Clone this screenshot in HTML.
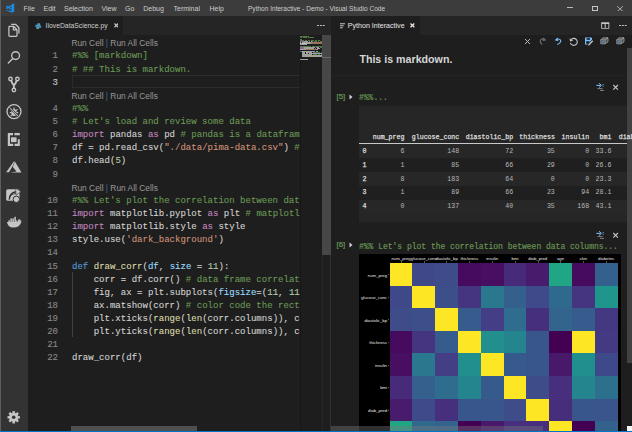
<!DOCTYPE html>
<html><head><meta charset="utf-8">
<style>
*{margin:0;padding:0;box-sizing:border-box}
html,body{width:632px;height:432px;overflow:hidden;background:#1e1e1e;font-family:"Liberation Sans",sans-serif}
.abs{position:absolute}
#title{position:absolute;left:0;top:0;width:632px;height:16px;background:#3c3c3c}
.menu{position:absolute;top:4.6px;font-size:7px;color:#cccccc;white-space:pre}
#ttl{position:absolute;top:5.2px;left:248px;font-size:6.55px;color:#cccccc;white-space:pre}
#act{position:absolute;left:0;top:16px;width:28px;height:415px;background:#333333}
#status{position:absolute;left:0;top:430.8px;width:632px;height:1.2px;background:#0076c6}
#ltabs{position:absolute;left:28px;top:16px;width:303px;height:19px;background:#252526}
#ltab{position:absolute;left:28px;top:16px;width:95px;height:19px;background:#1e1e1e}
#rtabs{position:absolute;left:331px;top:16px;width:301px;height:19px;background:#252526}
#rtab{position:absolute;left:331px;top:16px;width:89px;height:19px;background:#1e1e1e}
.tabt{position:absolute;font-size:6.8px;color:#ffffff;white-space:pre}
.lens{position:absolute;left:71.4px;font-size:8.4px;line-height:13.13px;color:#999999;white-space:pre}
.ln{position:absolute;left:27.5px;width:30px;text-align:right;font-family:"Liberation Mono",monospace;font-size:9.85px;line-height:13.13px;color:#858585;-webkit-text-stroke:0.15px currentColor;transform:scaleX(0.9178);transform-origin:100% 0}
.ln.cur{color:#c6c6c6}
.code{position:absolute;left:71.75px;width:248.7px;overflow:hidden;font-family:"Liberation Mono",monospace;font-size:9.85px;line-height:13.13px;color:#d4d4d4;white-space:pre;-webkit-text-stroke:0.1px currentColor;transform:scaleX(0.9178);transform-origin:0 0}
.c{color:#6a9955}.k{color:#c586c0}.d{color:#569cd6}.f{color:#dcdcaa}.s{color:#ce9178}.n{color:#b5cea8}.v{color:#9cdcfe}
#minimap{position:absolute;left:299.8px;top:35px;width:23px;height:396px;background:#1d1d1d;border-left:0.9px solid #171717}
.trow{position:absolute;left:358.6px;width:268px;height:13.8px}
.tb,.tv{position:absolute;font-family:"Liberation Mono",monospace;font-size:6.6px;line-height:8px;white-space:pre;color:#dcdcdc}
.tb{font-weight:400;-webkit-text-stroke:0.25px currentColor}
.tv{color:#b8b8b8}
.plab{position:absolute;font-size:4.25px;line-height:5px;color:#e8e8e8;white-space:pre}
</style></head><body>
<!-- title bar -->
<div id="title"></div>
<svg class="abs" style="left:0;top:0" width="24" height="16" viewBox="0 0 24 16">
 <path d="M11.4 4.3 L14.2 3.5 V12 L11.6 12.6 L6.2 10.7 L6.5 10.2 L11.4 11 Z" fill="#1b8ae0"/>
 <path d="M6.3 6.1 L11.4 9.2 M6.3 8.6 L11.4 5.6" stroke="#1b8ae0" stroke-width="1.3" fill="none"/>
</svg>
<div class="menu" style="left:23.5px">File</div>
<div class="menu" style="left:43.5px">Edit</div>
<div class="menu" style="left:64px">Selection</div>
<div class="menu" style="left:101.5px">View</div>
<div class="menu" style="left:125px">Go</div>
<div class="menu" style="left:143.2px">Debug</div>
<div class="menu" style="left:173.5px">Terminal</div>
<div class="menu" style="left:209.5px">Help</div>
<div id="ttl">Python Interactive - Demo - Visual Studio Code</div>
<!-- window controls -->
<div class="abs" style="left:566.8px;top:7.2px;width:6.4px;height:0.9px;background:#b8b8b8"></div>
<div class="abs" style="left:591.9px;top:5.5px;width:6.4px;height:5.8px;border:0.9px solid #c4c4c4"></div>
<svg class="abs" style="left:617px;top:5.6px" width="6.3" height="5.7" viewBox="0 0 6.3 5.7"><path d="M0.2 0.2 L6.1 5.5 M6.1 0.2 L0.2 5.5" stroke="#b8b8b8" stroke-width="0.9"/></svg>

<!-- activity bar -->
<div id="act"></div>
<svg class="abs" style="left:0;top:16px" width="28" height="28" viewBox="0 0 28 28" fill="none" stroke="#c5c5c5" stroke-width="1.25" stroke-linejoin="round">
 <path d="M9.8 10.3 H13.6 L17 13.7 V19.6 Q17 20.4 16.2 20.4 H9.8 Q8.9 20.4 8.9 19.6 V11.1 Q8.9 10.3 9.8 10.3 Z"/><path d="M13.4 10.5 V13.9 H16.8" /><path d="M11.2 8.3 H15.5 L18.9 11.7 V17.6"/></svg>
<svg class="abs" style="left:0;top:42px" width="28" height="28" viewBox="0 0 28 28" fill="none" stroke="#c5c5c5" stroke-width="1.35">
 <circle cx="15.6" cy="13.6" r="3.9"/><path d="M12.9 16.4 L8.3 21" stroke-linecap="round"/></svg>
<svg class="abs" style="left:0;top:67px" width="28" height="28" viewBox="0 0 28 28" fill="none" stroke="#c5c5c5" stroke-width="1.4">
 <circle cx="10.5" cy="12" r="1.7"/><circle cx="17.4" cy="12" r="1.7"/><circle cx="13.9" cy="23" r="1.7"/>
 <path d="M11.3 13.7 Q12.2 16.6 13.9 18.4 Q15.7 16.6 16.6 13.7 M13.9 18.2 V21.2" stroke-width="1.9"/></svg>
<svg class="abs" style="left:0;top:97px" width="28" height="28" viewBox="0 0 28 28" fill="none" stroke="#c5c5c5">
 <circle cx="14" cy="14.6" r="7" stroke-width="1.3"/>
 <ellipse cx="14" cy="15.4" rx="2.7" ry="3.5" fill="#c5c5c5" stroke="none"/>
 <path d="M10.4 12.4 L12.2 13.6 M9.8 15.6 H11.6 M10.6 19.2 L12.3 17.8 M17.6 12.4 L15.8 13.6 M18.2 15.6 H16.4 M17.4 19.2 L15.7 17.8 M14 10.4 V12" stroke-width="1.1"/>
 <path d="M9.6 10.4 L18.7 19.6" stroke="#333333" stroke-width="2"/><path d="M9.6 10.4 L18.7 19.6" stroke-width="1"/></svg>
<svg class="abs" style="left:0;top:125px" width="28" height="28" viewBox="0 0 28 28" fill="none" stroke="#c5c5c5" stroke-width="2.2">
 <path d="M13 9.2 H8.9 V19.9 H13.2 M14.6 19.9 H18.7 V14.2 M14.4 9.2 H19.8"/>
 <rect x="10.6" y="11.9" width="6.4" height="5.8" fill="#c5c5c5" stroke="#2a2a2a" stroke-width="0.8"/></svg>
<svg class="abs" style="left:0;top:153px" width="28" height="28" viewBox="0 0 28 28" fill="#c5c5c5">
 <path d="M6.2 19.2 L13.8 8.6 L14.6 8.6 L12.4 13.6 L9 19.2 Z"/><path d="M14.9 8.6 L21.5 19.6 H10.2 L16.5 18.4 L12.8 13.9 Z"/></svg>
<svg class="abs" style="left:0;top:180px" width="28" height="28" viewBox="0 0 28 28">
 <rect x="6.2" y="9.3" width="13.3" height="11.5" rx="1.6" fill="#c5c5c5"/>
 <path d="M9.3 19.6 Q9.5 12.4 16.5 11.8" fill="none" stroke="#333333" stroke-width="1.4"/>
 <path d="M9.3 19.6 Q9.8 13.8 16.3 13.5" fill="none" stroke="#333333" stroke-width="0.8"/>
 <path d="M15.6 8.2 L21 11.7 L16 15.2 Z" fill="#c5c5c5" stroke="#333333" stroke-width="0.6"/>
 <circle cx="16.3" cy="19.3" r="3.2" fill="#c5c5c5" stroke="#333333" stroke-width="1"/></svg>
<svg class="abs" style="left:0;top:208px" width="28" height="28" viewBox="0 0 28 28" fill="#c5c5c5">
 <path d="M6.9 14.1 H21.4 Q19.8 19.6 13.2 19.6 Q8 19.6 6.9 14.1 Z"/>
 <path d="M17.4 14.3 L18.9 10.7 L21.9 13.4 Z"/>
 <rect x="8.4" y="12.3" width="1.5" height="1.8"/><rect x="10.4" y="10.4" width="1.5" height="3.7"/><rect x="12.4" y="10.4" width="1.5" height="3.7"/><rect x="14.4" y="8.8" width="1.5" height="5.3"/><rect x="16.2" y="12.3" width="1.2" height="1.8"/>
</svg>
<svg class="abs" style="left:0;top:403px" width="28" height="28" viewBox="0 0 28 28">
 <g transform="translate(13.7 14.3)" fill="#c5c5c5">
 <circle r="4.6"/>
 <rect x="-1.2" y="-6.2" width="2.4" height="12.4"/><rect x="-1.2" y="-6.2" width="2.4" height="12.4" transform="rotate(45)"/><rect x="-1.2" y="-6.2" width="2.4" height="12.4" transform="rotate(90)"/><rect x="-1.2" y="-6.2" width="2.4" height="12.4" transform="rotate(135)"/>
 <circle r="1.8" fill="#333333"/></g></svg>

<!-- left group -->
<div id="ltabs"></div>
<div id="ltab"></div>
<svg class="abs" style="left:35.4px;top:22.6px" width="6.6" height="6.6" viewBox="0 0 8 8"><path d="M3 0.4 H5.2 Q6.4 0.4 6.4 1.6 V3.4 H7 Q7.7 3.4 7.7 4.6 Q7.7 5.8 7 5.8 H5 V6.4 Q5 7.6 3.8 7.6 H2.8 Q1.6 7.6 1.6 6.4 V4.6 H1 Q0.3 4.6 0.3 3.4 Q0.3 2.2 1 2.2 H3 Z" fill="#519aba"/><rect x="2.9" y="3.5" width="2.2" height="1" fill="#2d6f96"/></svg>
<div class="tabt" style="left:45.6px;top:22px;color:#cfcfcf">IloveDataScience.py</div>
<svg class="abs" style="left:113.6px;top:23.4px" width="4.8" height="4.8" viewBox="0 0 4.8 4.8"><path d="M0.5 0.5 L4.3 4.3 M4.3 0.5 L0.5 4.3" stroke="#c8c8c8" stroke-width="1.2"/></svg>
<div class="abs" style="left:317.4px;top:24.6px;width:1.6px;height:1.6px;border-radius:50%;background:#d0d0d0;box-shadow:2.85px 0 0 #d0d0d0,5.7px 0 0 #d0d0d0"></div>

<div class="lens" style="top:37.30px">Run Cell <span style="color:#3c6e99">|</span> Run All Cells</div>
<div class="ln" style="top:49.43px">1</div><div class="code" style="top:49.43px"><span class="c">#%% [markdown]</span></div>
<div class="ln" style="top:62.56px">2</div><div class="code" style="top:62.56px"><span class="c"># ## This is markdown.</span></div>
<div class="ln cur" style="top:75.69px">3</div><div class="code" style="top:75.69px"></div>
<div class="lens" style="top:89.82px">Run Cell <span style="color:#3c6e99">|</span> Run All Cells</div>
<div class="ln" style="top:101.95px">4</div><div class="code" style="top:101.95px"><span class="c">#%%</span></div>
<div class="ln" style="top:115.08px">5</div><div class="code" style="top:115.08px"><span class="c"># Let&#x27;s load and review some data</span></div>
<div class="ln" style="top:128.21px">6</div><div class="code" style="top:128.21px"><span class="k">import</span> pandas <span class="k">as</span> pd <span class="c"># pandas is a dataframe library</span></div>
<div class="ln" style="top:141.34px">7</div><div class="code" style="top:141.34px">df = pd.read_csv(<span class="s">&quot;./data/pima-data.csv&quot;</span>) <span class="c"># load Pima data</span></div>
<div class="ln" style="top:154.47px">8</div><div class="code" style="top:154.47px">df.head(<span class="n">5</span>)</div>
<div class="ln" style="top:167.60px">9</div><div class="code" style="top:167.60px"></div>
<div class="lens" style="top:181.73px">Run Cell <span style="color:#3c6e99">|</span> Run All Cells</div>
<div class="ln" style="top:193.86px">10</div><div class="code" style="top:193.86px"><span class="c">#%% Let&#x27;s plot the correlation between data columns</span></div>
<div class="ln" style="top:206.99px">11</div><div class="code" style="top:206.99px"><span class="k">import</span> matplotlib.pyplot <span class="k">as</span> plt <span class="c"># matplotlib</span></div>
<div class="ln" style="top:220.12px">12</div><div class="code" style="top:220.12px"><span class="k">import</span> matplotlib.style <span class="k">as</span> style</div>
<div class="ln" style="top:233.25px">13</div><div class="code" style="top:233.25px">style.use(<span class="s">&#x27;dark_background&#x27;</span>)</div>
<div class="ln" style="top:246.38px">14</div><div class="code" style="top:246.38px"></div>
<div class="ln" style="top:259.51px">15</div><div class="code" style="top:259.51px"><span class="d">def</span> <span class="f">draw_corr</span>(<span class="v">df</span>, <span class="v">size</span> = <span class="n">11</span>):</div>
<div class="ln" style="top:272.64px">16</div><div class="code" style="top:272.64px">    corr = df.corr() <span class="c"># data frame correlation function</span></div>
<div class="ln" style="top:285.77px">17</div><div class="code" style="top:285.77px">    fig, ax = plt.subplots(<span class="v">figsize</span>=(<span class="n">11</span>, <span class="n">11</span>))</div>
<div class="ln" style="top:298.90px">18</div><div class="code" style="top:298.90px">    ax.matshow(corr) <span class="c"># color code the rectangles by correlation value</span></div>
<div class="ln" style="top:312.03px">19</div><div class="code" style="top:312.03px">    plt.xticks(<span class="f">range</span>(<span class="f">len</span>(corr.columns)), corr.columns)</div>
<div class="ln" style="top:325.16px">20</div><div class="code" style="top:325.16px">    plt.yticks(<span class="f">range</span>(<span class="f">len</span>(corr.columns)), corr.columns)</div>
<div class="ln" style="top:338.29px">21</div><div class="code" style="top:338.29px"></div>
<div class="ln" style="top:351.42px">22</div><div class="code" style="top:351.42px">draw_corr(df)</div>

<!-- current line box -->
<div class="abs" style="left:71.9px;top:75.1px;width:228.1px;height:12.5px;border:1px solid #2c2c2c;border-right:none"></div>
<!-- indent guide -->
<div class="abs" style="left:72px;top:272px;width:1px;height:65px;background:#404040"></div>

<div id="minimap"></div>
<div style="position:absolute;left:300.00px;top:35.90px;width:1.86px;height:1.15px;background:#6a9955;opacity:.72"></div><div style="position:absolute;left:302.48px;top:35.90px;width:6.20px;height:1.15px;background:#6a9955;opacity:.72"></div><div style="position:absolute;left:300.00px;top:36.98px;width:0.62px;height:1.15px;background:#6a9955;opacity:.72"></div><div style="position:absolute;left:301.24px;top:36.98px;width:1.24px;height:1.15px;background:#6a9955;opacity:.72"></div><div style="position:absolute;left:303.10px;top:36.98px;width:2.48px;height:1.15px;background:#6a9955;opacity:.72"></div><div style="position:absolute;left:306.20px;top:36.98px;width:1.24px;height:1.15px;background:#6a9955;opacity:.72"></div><div style="position:absolute;left:308.06px;top:36.98px;width:5.58px;height:1.15px;background:#6a9955;opacity:.72"></div><div style="position:absolute;left:300.00px;top:39.13px;width:1.86px;height:1.15px;background:#6a9955;opacity:.72"></div><div style="position:absolute;left:300.00px;top:40.20px;width:0.62px;height:1.15px;background:#6a9955;opacity:.72"></div><div style="position:absolute;left:301.24px;top:40.20px;width:3.10px;height:1.15px;background:#6a9955;opacity:.72"></div><div style="position:absolute;left:304.96px;top:40.20px;width:2.48px;height:1.15px;background:#6a9955;opacity:.72"></div><div style="position:absolute;left:308.06px;top:40.20px;width:1.86px;height:1.15px;background:#6a9955;opacity:.72"></div><div style="position:absolute;left:310.54px;top:40.20px;width:3.72px;height:1.15px;background:#6a9955;opacity:.72"></div><div style="position:absolute;left:314.88px;top:40.20px;width:2.48px;height:1.15px;background:#6a9955;opacity:.72"></div><div style="position:absolute;left:317.98px;top:40.20px;width:2.48px;height:1.15px;background:#6a9955;opacity:.72"></div><div style="position:absolute;left:300.00px;top:41.28px;width:3.72px;height:1.15px;background:#c586c0;opacity:.72"></div><div style="position:absolute;left:304.34px;top:41.28px;width:3.72px;height:1.15px;background:#d4d4d4;opacity:.72"></div><div style="position:absolute;left:308.68px;top:41.28px;width:1.24px;height:1.15px;background:#c586c0;opacity:.72"></div><div style="position:absolute;left:310.54px;top:41.28px;width:1.24px;height:1.15px;background:#d4d4d4;opacity:.72"></div><div style="position:absolute;left:312.40px;top:41.28px;width:0.62px;height:1.15px;background:#6a9955;opacity:.72"></div><div style="position:absolute;left:313.64px;top:41.28px;width:3.72px;height:1.15px;background:#6a9955;opacity:.72"></div><div style="position:absolute;left:317.98px;top:41.28px;width:1.24px;height:1.15px;background:#6a9955;opacity:.72"></div><div style="position:absolute;left:319.84px;top:41.28px;width:0.62px;height:1.15px;background:#6a9955;opacity:.72"></div><div style="position:absolute;left:321.08px;top:41.28px;width:1.42px;height:1.15px;background:#6a9955;opacity:.72"></div><div style="position:absolute;left:300.00px;top:42.36px;width:1.24px;height:1.15px;background:#d4d4d4;opacity:.72"></div><div style="position:absolute;left:301.86px;top:42.36px;width:0.62px;height:1.15px;background:#d4d4d4;opacity:.72"></div><div style="position:absolute;left:303.10px;top:42.36px;width:7.44px;height:1.15px;background:#d4d4d4;opacity:.72"></div><div style="position:absolute;left:310.54px;top:42.36px;width:11.96px;height:1.15px;background:#ce9178;opacity:.72"></div><div style="position:absolute;left:300.00px;top:43.43px;width:4.96px;height:1.15px;background:#d4d4d4;opacity:.72"></div><div style="position:absolute;left:304.96px;top:43.43px;width:0.62px;height:1.15px;background:#b5cea8;opacity:.72"></div><div style="position:absolute;left:305.58px;top:43.43px;width:0.62px;height:1.15px;background:#d4d4d4;opacity:.72"></div><div style="position:absolute;left:300.00px;top:45.58px;width:1.86px;height:1.15px;background:#6a9955;opacity:.72"></div><div style="position:absolute;left:302.48px;top:45.58px;width:3.10px;height:1.15px;background:#6a9955;opacity:.72"></div><div style="position:absolute;left:306.20px;top:45.58px;width:2.48px;height:1.15px;background:#6a9955;opacity:.72"></div><div style="position:absolute;left:309.30px;top:45.58px;width:1.86px;height:1.15px;background:#6a9955;opacity:.72"></div><div style="position:absolute;left:311.78px;top:45.58px;width:6.82px;height:1.15px;background:#6a9955;opacity:.72"></div><div style="position:absolute;left:319.22px;top:45.58px;width:3.28px;height:1.15px;background:#6a9955;opacity:.72"></div><div style="position:absolute;left:300.00px;top:46.66px;width:3.72px;height:1.15px;background:#c586c0;opacity:.72"></div><div style="position:absolute;left:304.34px;top:46.66px;width:10.54px;height:1.15px;background:#d4d4d4;opacity:.72"></div><div style="position:absolute;left:315.50px;top:46.66px;width:1.24px;height:1.15px;background:#c586c0;opacity:.72"></div><div style="position:absolute;left:317.36px;top:46.66px;width:1.86px;height:1.15px;background:#d4d4d4;opacity:.72"></div><div style="position:absolute;left:319.84px;top:46.66px;width:0.62px;height:1.15px;background:#6a9955;opacity:.72"></div><div style="position:absolute;left:321.08px;top:46.66px;width:1.42px;height:1.15px;background:#6a9955;opacity:.72"></div><div style="position:absolute;left:300.00px;top:47.74px;width:3.72px;height:1.15px;background:#c586c0;opacity:.72"></div><div style="position:absolute;left:304.34px;top:47.74px;width:9.92px;height:1.15px;background:#d4d4d4;opacity:.72"></div><div style="position:absolute;left:314.88px;top:47.74px;width:1.24px;height:1.15px;background:#c586c0;opacity:.72"></div><div style="position:absolute;left:316.74px;top:47.74px;width:3.10px;height:1.15px;background:#d4d4d4;opacity:.72"></div><div style="position:absolute;left:300.00px;top:48.81px;width:6.20px;height:1.15px;background:#d4d4d4;opacity:.72"></div><div style="position:absolute;left:306.20px;top:48.81px;width:10.54px;height:1.15px;background:#ce9178;opacity:.72"></div><div style="position:absolute;left:316.74px;top:48.81px;width:0.62px;height:1.15px;background:#d4d4d4;opacity:.72"></div><div style="position:absolute;left:300.00px;top:50.96px;width:1.86px;height:1.15px;background:#569cd6;opacity:.72"></div><div style="position:absolute;left:302.48px;top:50.96px;width:5.58px;height:1.15px;background:#dcdcaa;opacity:.72"></div><div style="position:absolute;left:308.06px;top:50.96px;width:0.62px;height:1.15px;background:#d4d4d4;opacity:.72"></div><div style="position:absolute;left:308.68px;top:50.96px;width:1.24px;height:1.15px;background:#9cdcfe;opacity:.72"></div><div style="position:absolute;left:309.92px;top:50.96px;width:0.62px;height:1.15px;background:#d4d4d4;opacity:.72"></div><div style="position:absolute;left:311.16px;top:50.96px;width:2.48px;height:1.15px;background:#9cdcfe;opacity:.72"></div><div style="position:absolute;left:314.26px;top:50.96px;width:0.62px;height:1.15px;background:#d4d4d4;opacity:.72"></div><div style="position:absolute;left:315.50px;top:50.96px;width:1.24px;height:1.15px;background:#b5cea8;opacity:.72"></div><div style="position:absolute;left:316.74px;top:50.96px;width:1.24px;height:1.15px;background:#d4d4d4;opacity:.72"></div><div style="position:absolute;left:302.48px;top:52.04px;width:2.48px;height:1.15px;background:#d4d4d4;opacity:.72"></div><div style="position:absolute;left:305.58px;top:52.04px;width:0.62px;height:1.15px;background:#d4d4d4;opacity:.72"></div><div style="position:absolute;left:306.82px;top:52.04px;width:5.58px;height:1.15px;background:#d4d4d4;opacity:.72"></div><div style="position:absolute;left:313.02px;top:52.04px;width:0.62px;height:1.15px;background:#6a9955;opacity:.72"></div><div style="position:absolute;left:314.26px;top:52.04px;width:2.48px;height:1.15px;background:#6a9955;opacity:.72"></div><div style="position:absolute;left:317.36px;top:52.04px;width:3.10px;height:1.15px;background:#6a9955;opacity:.72"></div><div style="position:absolute;left:321.08px;top:52.04px;width:1.42px;height:1.15px;background:#6a9955;opacity:.72"></div><div style="position:absolute;left:302.48px;top:53.12px;width:2.48px;height:1.15px;background:#d4d4d4;opacity:.72"></div><div style="position:absolute;left:305.58px;top:53.12px;width:1.24px;height:1.15px;background:#d4d4d4;opacity:.72"></div><div style="position:absolute;left:307.44px;top:53.12px;width:0.62px;height:1.15px;background:#d4d4d4;opacity:.72"></div><div style="position:absolute;left:308.68px;top:53.12px;width:8.06px;height:1.15px;background:#d4d4d4;opacity:.72"></div><div style="position:absolute;left:316.74px;top:53.12px;width:4.34px;height:1.15px;background:#9cdcfe;opacity:.72"></div><div style="position:absolute;left:321.08px;top:53.12px;width:1.24px;height:1.15px;background:#d4d4d4;opacity:.72"></div><div style="position:absolute;left:322.32px;top:53.12px;width:0.18px;height:1.15px;background:#b5cea8;opacity:.72"></div><div style="position:absolute;left:302.48px;top:54.19px;width:9.92px;height:1.15px;background:#d4d4d4;opacity:.72"></div><div style="position:absolute;left:313.02px;top:54.19px;width:0.62px;height:1.15px;background:#6a9955;opacity:.72"></div><div style="position:absolute;left:314.26px;top:54.19px;width:3.10px;height:1.15px;background:#6a9955;opacity:.72"></div><div style="position:absolute;left:317.98px;top:54.19px;width:2.48px;height:1.15px;background:#6a9955;opacity:.72"></div><div style="position:absolute;left:321.08px;top:54.19px;width:1.42px;height:1.15px;background:#6a9955;opacity:.72"></div><div style="position:absolute;left:302.48px;top:55.27px;width:6.82px;height:1.15px;background:#d4d4d4;opacity:.72"></div><div style="position:absolute;left:309.30px;top:55.27px;width:3.10px;height:1.15px;background:#dcdcaa;opacity:.72"></div><div style="position:absolute;left:312.40px;top:55.27px;width:0.62px;height:1.15px;background:#d4d4d4;opacity:.72"></div><div style="position:absolute;left:313.02px;top:55.27px;width:1.86px;height:1.15px;background:#dcdcaa;opacity:.72"></div><div style="position:absolute;left:314.88px;top:55.27px;width:7.62px;height:1.15px;background:#d4d4d4;opacity:.72"></div><div style="position:absolute;left:302.48px;top:56.34px;width:6.82px;height:1.15px;background:#d4d4d4;opacity:.72"></div><div style="position:absolute;left:309.30px;top:56.34px;width:3.10px;height:1.15px;background:#dcdcaa;opacity:.72"></div><div style="position:absolute;left:312.40px;top:56.34px;width:0.62px;height:1.15px;background:#d4d4d4;opacity:.72"></div><div style="position:absolute;left:313.02px;top:56.34px;width:1.86px;height:1.15px;background:#dcdcaa;opacity:.72"></div><div style="position:absolute;left:314.88px;top:56.34px;width:7.62px;height:1.15px;background:#d4d4d4;opacity:.72"></div><div style="position:absolute;left:300.00px;top:58.50px;width:8.06px;height:1.15px;background:#d4d4d4;opacity:.72"></div>
<!-- vertical scrollbar slider -->
<div class="abs" style="left:322.4px;top:35px;width:8.4px;height:219.8px;background:#474747"></div><div class="abs" style="left:322.4px;top:254.8px;width:8.4px;height:176px;border-left:0.6px solid #262626;border-right:0.8px solid #323232"></div>
<div class="abs" style="left:322.4px;top:57px;width:8.4px;height:1px;background:#6a6a6a"></div>
<!-- horizontal scrollbar -->
<div class="abs" style="left:71px;top:426px;width:126px;height:5px;background:#4f4f4f"></div>

<!-- right group -->

<div id="rtabs"></div>
<div id="rtab"></div>
<svg class="abs" style="left:339.5px;top:22.5px" width="5.5" height="6" viewBox="0 0 6 6" fill="#c5c5c5"><rect x="0" y="0" width="6" height="1.1"/><rect x="0" y="2.2" width="4" height="1.1"/><rect x="0" y="4.4" width="3" height="1.1"/></svg>
<div class="tabt" style="left:347.8px;top:22.1px;font-size:7.1px;color:#e8e8e8">Python Interactive</div>
<svg class="abs" style="left:410.4px;top:23.4px" width="4.8" height="4.8" viewBox="0 0 4.8 4.8"><path d="M0.5 0.5 L4.3 4.3 M4.3 0.5 L0.5 4.3" stroke="#e8e8e8" stroke-width="1.3"/></svg>
<!-- split & more -->
<svg class="abs" style="left:601px;top:22px" width="8.5" height="7" viewBox="0 0 8.5 7"><path d="M0.2 0.2 H8.3 V6.8 H0.2 Z M1.1 1.9 V5.9 H3.7 V1.9 Z M4.7 1.9 V5.9 H7.4 V1.9 Z" fill="#c5c5c5" fill-rule="evenodd"/></svg>
<div class="abs" style="left:619.4px;top:24.6px;width:1.6px;height:1.6px;border-radius:50%;background:#d0d0d0;box-shadow:2.85px 0 0 #d0d0d0,5.7px 0 0 #d0d0d0"></div>
<!-- toolbar -->
<svg class="abs" style="left:520px;top:33px" width="112" height="17" viewBox="520 33 112 17">
 <path d="M525 39 L530 44 M530 39 L525 44" stroke="#c5c5c5" stroke-width="0.95" fill="none"/>
 <path d="M542.3 44.6 Q539.6 42.5 540.4 40.3 Q541.6 38 544.6 39.4" stroke="#6e6e6e" stroke-width="1.1" fill="none"/>
 <path d="M543.4 37.4 L546.4 40.3 L542.6 41.3 Z" fill="#6e6e6e"/>
 <path d="M557.3 44.6 Q561.5 42.5 560.6 40.3 Q559.6 38.3 556.4 39.4" stroke="#75beff" stroke-width="1.1" fill="none"/>
 <path d="M557.6 37.4 L554.6 40.3 L558.4 41.3 Z" fill="#75beff"/>
 <path d="M571.4 39.3 A3.5 3.5 0 1 1 570.4 42.8" stroke="#c5c5c5" stroke-width="1.1" fill="none"/>
 <path d="M569.6 38.2 L570 41.6 L573.2 40.6 Z" fill="#c5c5c5"/>
 <path d="M585 37.4 H591.4 L592 38 V42 L589 44.6 H585 Z" fill="#75beff"/>
 <rect x="586.6" y="38.2" width="3.4" height="1.6" fill="#1e1e1e"/>
 <rect x="586.2" y="41.2" width="3.2" height="2.6" fill="#1e1e1e"/>
 <path d="M588.2 45.2 L592.8 40.6" stroke="#1e1e1e" stroke-width="2.4"/>
 <path d="M588.4 45.2 L592.8 40.8" stroke="#c8c8c8" stroke-width="1.3"/>
 <g id="bx">
 <path d="M600.8 39.8 L602.8 37.8 H608 V41.8 L605.1 43.8 H600.8 Z" fill="#4a4a4a" stroke="#b8b8b8" stroke-width="0.7"/>
 <path d="M600.8 39.8 H605.1 V43.8 M605.1 39.8 L608 37.8" stroke="#b8b8b8" stroke-width="0.7" fill="none"/>
 <rect x="602.1" y="40.9" width="1.9" height="1.8" fill="#3d95e0"/>
 </g>
 <use href="#bx" transform="translate(16 0)"/>
</svg>
<!-- right scrollbar -->
<div class="abs" style="left:627px;top:47.5px;width:5px;height:315px;background:#424242"></div>

<!-- separator lines -->

<div class="abs" style="left:331px;top:75px;width:296px;height:1px;background:#232323"></div>
<!-- markdown -->
<div class="abs" style="left:359.4px;top:53px;font-size:10.66px;font-weight:700;color:#d6d6d6;white-space:pre">This is markdown.</div>
<!-- second toolbar -->
<svg class="abs" style="left:590px;top:78px" width="36" height="18" viewBox="590 78 36 18">
 <path d="M596.4 85.4 H600.6" stroke="#75beff" stroke-width="1.1"/><path d="M599 83.2 L601.4 85.4 L599 87.6" stroke="#75beff" stroke-width="1" fill="none"/>
 <path d="M602.4 84.6 H604 M602.4 86.2 H604" stroke="#8a8a8a" stroke-width="0.8"/>
 <path d="M597.4 88.6 H602.6 M600 90.4 H604" stroke="#9a9a9a" stroke-width="0.8"/>
 <path d="M613.3 85 L617.9 89.6 M617.9 85 L613.3 89.6" stroke="#c8c8c8" stroke-width="1.1"/>
</svg>
<!-- [5] -->
<div class="abs" style="left:336.6px;top:92px;font-size:7.7px;color:#6a9955;white-space:pre;-webkit-text-stroke:0.2px currentColor">[5]</div>
<svg class="abs" style="left:348.5px;top:93.5px" width="4" height="6" viewBox="0 0 4 6"><path d="M0.5 0.5 L3.5 3 L0.5 5.5 Z" fill="#d0d0d0"/></svg>
<div class="abs" style="left:358.9px;top:92.9px;font-family:'Liberation Mono',monospace;font-size:8.73px;line-height:10px;color:#6a9955;white-space:pre;-webkit-text-stroke:0.15px currentColor;transform:scaleX(0.9164);transform-origin:0 0">#%%...</div>
<!-- output table bg -->
<div class="abs" style="left:358.6px;top:106px;width:268.4px;height:115.5px;background:#262626"></div>
<div class="trow" style="top:144.30px;background:#272727"></div><div class="trow" style="top:158.15px;background:#1f1f1f"></div><div class="trow" style="top:172.00px;background:#272727"></div><div class="trow" style="top:185.85px;background:#1f1f1f"></div><div class="trow" style="top:199.70px;background:#272727"></div><div class="tb" style="left:372.80px;top:133.50px;width:33.60px">num_preg</div><div class="tv" style="left:400.45px;top:147.90px;width:5.95px">6</div><div class="tv" style="left:400.45px;top:161.75px;width:5.95px">1</div><div class="tv" style="left:400.45px;top:175.60px;width:5.95px">8</div><div class="tv" style="left:400.45px;top:189.45px;width:5.95px">1</div><div class="tv" style="left:400.45px;top:203.30px;width:5.95px">0</div><div class="tb" style="left:411.80px;top:133.50px;width:49.40px">glucose_conc</div><div class="tv" style="left:447.35px;top:147.90px;width:13.85px">148</div><div class="tv" style="left:451.30px;top:161.75px;width:9.90px">85</div><div class="tv" style="left:447.35px;top:175.60px;width:13.85px">183</div><div class="tv" style="left:451.30px;top:189.45px;width:9.90px">89</div><div class="tv" style="left:447.35px;top:203.30px;width:13.85px">137</div><div class="tb" style="left:465.70px;top:133.50px;width:49.40px">diastolic_bp</div><div class="tv" style="left:505.20px;top:147.90px;width:9.90px">72</div><div class="tv" style="left:505.20px;top:161.75px;width:9.90px">66</div><div class="tv" style="left:505.20px;top:175.60px;width:9.90px">64</div><div class="tv" style="left:505.20px;top:189.45px;width:9.90px">66</div><div class="tv" style="left:505.20px;top:203.30px;width:9.90px">40</div><div class="tb" style="left:519.25px;top:133.50px;width:37.55px">thickness</div><div class="tv" style="left:546.90px;top:147.90px;width:9.90px">35</div><div class="tv" style="left:546.90px;top:161.75px;width:9.90px">29</div><div class="tv" style="left:550.85px;top:175.60px;width:5.95px">0</div><div class="tv" style="left:546.90px;top:189.45px;width:9.90px">23</div><div class="tv" style="left:546.90px;top:203.30px;width:9.90px">35</div><div class="tb" style="left:561.55px;top:133.50px;width:29.65px">insulin</div><div class="tv" style="left:585.25px;top:147.90px;width:5.95px">0</div><div class="tv" style="left:585.25px;top:161.75px;width:5.95px">0</div><div class="tv" style="left:585.25px;top:175.60px;width:5.95px">0</div><div class="tv" style="left:581.30px;top:189.45px;width:9.90px">94</div><div class="tv" style="left:577.35px;top:203.30px;width:13.85px">168</div><div class="tb" style="left:599.55px;top:133.50px;width:13.85px">bmi</div><div class="tv" style="left:595.60px;top:147.90px;width:17.80px">33.6</div><div class="tv" style="left:595.60px;top:161.75px;width:17.80px">26.6</div><div class="tv" style="left:595.60px;top:175.60px;width:17.80px">23.3</div><div class="tv" style="left:595.60px;top:189.45px;width:17.80px">28.1</div><div class="tv" style="left:595.60px;top:203.30px;width:17.80px">43.1</div><div class="tb" style="left:618.70px;top:133.50px;width:37.55px">diab_pred</div><div class="tv" style="left:634.50px;top:147.90px;width:21.75px">0.627</div><div class="tv" style="left:634.50px;top:161.75px;width:21.75px">0.351</div><div class="tv" style="left:634.50px;top:175.60px;width:21.75px">0.672</div><div class="tv" style="left:634.50px;top:189.45px;width:21.75px">0.167</div><div class="tv" style="left:634.50px;top:203.30px;width:21.75px">2.288</div><div class="tb" style="left:669.45px;top:133.50px;width:13.85px">age</div><div class="tv" style="left:673.40px;top:147.90px;width:9.90px">50</div><div class="tv" style="left:673.40px;top:161.75px;width:9.90px">31</div><div class="tv" style="left:673.40px;top:175.60px;width:9.90px">32</div><div class="tv" style="left:673.40px;top:189.45px;width:9.90px">21</div><div class="tv" style="left:673.40px;top:203.30px;width:9.90px">33</div><div class="tb" style="left:692.55px;top:133.50px;width:17.80px">skin</div><div class="tv" style="left:684.65px;top:147.90px;width:25.70px">1.3790</div><div class="tv" style="left:684.65px;top:161.75px;width:25.70px">1.1426</div><div class="tv" style="left:684.65px;top:175.60px;width:25.70px">0.0000</div><div class="tv" style="left:684.65px;top:189.45px;width:25.70px">0.9062</div><div class="tv" style="left:684.65px;top:203.30px;width:25.70px">1.3790</div><div class="tb" style="left:715.65px;top:133.50px;width:33.60px">diabetes</div><div class="tv" style="left:731.45px;top:147.90px;width:17.80px">True</div><div class="tv" style="left:727.50px;top:161.75px;width:21.75px">False</div><div class="tv" style="left:731.45px;top:175.60px;width:17.80px">True</div><div class="tv" style="left:727.50px;top:189.45px;width:21.75px">False</div><div class="tv" style="left:731.45px;top:203.30px;width:17.80px">True</div><div class="tb" style="left:362.5px;top:147.90px">0</div><div class="tb" style="left:362.5px;top:161.75px">1</div><div class="tb" style="left:362.5px;top:175.60px">2</div><div class="tb" style="left:362.5px;top:189.45px">3</div><div class="tb" style="left:362.5px;top:203.30px">4</div>
<div class="abs" style="left:358.6px;top:142.6px;width:268.4px;height:1.2px;background:#c8c8c8"></div>

<!-- [6] -->

<svg class="abs" style="left:590px;top:226px" width="36" height="18" viewBox="590 78 36 18">
 <path d="M596.4 85.4 H600.6" stroke="#75beff" stroke-width="1.1"/><path d="M599 83.2 L601.4 85.4 L599 87.6" stroke="#75beff" stroke-width="1" fill="none"/>
 <path d="M602.4 84.6 H604 M602.4 86.2 H604" stroke="#8a8a8a" stroke-width="0.8"/>
 <path d="M597.4 88.6 H602.6 M600 90.4 H604" stroke="#9a9a9a" stroke-width="0.8"/>
 <path d="M613.3 85 L617.9 89.6 M617.9 85 L613.3 89.6" stroke="#c8c8c8" stroke-width="1.1"/>
</svg>
<div class="abs" style="left:336.6px;top:239.8px;font-size:7.7px;color:#6a9955;white-space:pre;-webkit-text-stroke:0.2px currentColor">[6]</div>
<svg class="abs" style="left:348.5px;top:242px" width="4" height="6" viewBox="0 0 4 6"><path d="M0.5 0.5 L3.5 3 L0.5 5.5 Z" fill="#d0d0d0"/></svg>
<div class="abs" style="left:359.1px;top:242.1px;font-family:'Liberation Mono',monospace;font-size:8.73px;line-height:10px;color:#6a9955;white-space:pre;-webkit-text-stroke:0.15px currentColor;transform:scaleX(0.9164);transform-origin:0 0">#%% Let's plot the correlation between data columns...</div>
<!-- plot -->
<div class="abs" style="left:358.8px;top:254px;width:262.2px;height:177px;background:#000000"></div>
<div style="position:absolute;left:389.70px;top:263.10px;width:23.08px;height:22.89px;background:#fde725"></div><div style="position:absolute;left:412.48px;top:263.10px;width:23.08px;height:22.89px;background:#3f4889"></div><div style="position:absolute;left:435.26px;top:263.10px;width:23.08px;height:22.89px;background:#3e4c8a"></div><div style="position:absolute;left:458.04px;top:263.10px;width:23.08px;height:22.89px;background:#460b5e"></div><div style="position:absolute;left:480.82px;top:263.10px;width:23.08px;height:22.89px;background:#470e61"></div><div style="position:absolute;left:503.60px;top:263.10px;width:23.08px;height:22.89px;background:#472a7a"></div><div style="position:absolute;left:526.38px;top:263.10px;width:23.08px;height:22.89px;background:#481b6d"></div><div style="position:absolute;left:549.16px;top:263.10px;width:23.08px;height:22.89px;background:#21a685"></div><div style="position:absolute;left:571.94px;top:263.10px;width:23.08px;height:22.89px;background:#460b5e"></div><div style="position:absolute;left:594.72px;top:263.10px;width:23.08px;height:22.89px;background:#34608d"></div><div style="position:absolute;left:389.70px;top:285.69px;width:23.08px;height:22.89px;background:#3f4889"></div><div style="position:absolute;left:412.48px;top:285.69px;width:23.08px;height:22.89px;background:#fde725"></div><div style="position:absolute;left:435.26px;top:285.69px;width:23.08px;height:22.89px;background:#3c4f8a"></div><div style="position:absolute;left:458.04px;top:285.69px;width:23.08px;height:22.89px;background:#453581"></div><div style="position:absolute;left:480.82px;top:285.69px;width:23.08px;height:22.89px;background:#2a788e"></div><div style="position:absolute;left:503.60px;top:285.69px;width:23.08px;height:22.89px;background:#355f8d"></div><div style="position:absolute;left:526.38px;top:285.69px;width:23.08px;height:22.89px;background:#3e4a89"></div><div style="position:absolute;left:549.16px;top:285.69px;width:23.08px;height:22.89px;background:#30698e"></div><div style="position:absolute;left:571.94px;top:285.69px;width:23.08px;height:22.89px;background:#453581"></div><div style="position:absolute;left:594.72px;top:285.69px;width:23.08px;height:22.89px;background:#1f958b"></div><div style="position:absolute;left:389.70px;top:308.28px;width:23.08px;height:22.89px;background:#3e4c8a"></div><div style="position:absolute;left:412.48px;top:308.28px;width:23.08px;height:22.89px;background:#3c4f8a"></div><div style="position:absolute;left:435.26px;top:308.28px;width:23.08px;height:22.89px;background:#fde725"></div><div style="position:absolute;left:458.04px;top:308.28px;width:23.08px;height:22.89px;background:#365c8d"></div><div style="position:absolute;left:480.82px;top:308.28px;width:23.08px;height:22.89px;background:#433e85"></div><div style="position:absolute;left:503.60px;top:308.28px;width:23.08px;height:22.89px;background:#2e6d8e"></div><div style="position:absolute;left:526.38px;top:308.28px;width:23.08px;height:22.89px;background:#46307e"></div><div style="position:absolute;left:549.16px;top:308.28px;width:23.08px;height:22.89px;background:#32648e"></div><div style="position:absolute;left:571.94px;top:308.28px;width:23.08px;height:22.89px;background:#365c8d"></div><div style="position:absolute;left:594.72px;top:308.28px;width:23.08px;height:22.89px;background:#453882"></div><div style="position:absolute;left:389.70px;top:330.87px;width:23.08px;height:22.89px;background:#460b5e"></div><div style="position:absolute;left:412.48px;top:330.87px;width:23.08px;height:22.89px;background:#453581"></div><div style="position:absolute;left:435.26px;top:330.87px;width:23.08px;height:22.89px;background:#365c8d"></div><div style="position:absolute;left:458.04px;top:330.87px;width:23.08px;height:22.89px;background:#fde725"></div><div style="position:absolute;left:480.82px;top:330.87px;width:23.08px;height:22.89px;background:#218f8d"></div><div style="position:absolute;left:503.60px;top:330.87px;width:23.08px;height:22.89px;background:#25858e"></div><div style="position:absolute;left:526.38px;top:330.87px;width:23.08px;height:22.89px;background:#39568c"></div><div style="position:absolute;left:549.16px;top:330.87px;width:23.08px;height:22.89px;background:#440154"></div><div style="position:absolute;left:571.94px;top:330.87px;width:23.08px;height:22.89px;background:#fde725"></div><div style="position:absolute;left:594.72px;top:330.87px;width:23.08px;height:22.89px;background:#443a83"></div><div style="position:absolute;left:389.70px;top:353.46px;width:23.08px;height:22.89px;background:#470e61"></div><div style="position:absolute;left:412.48px;top:353.46px;width:23.08px;height:22.89px;background:#2a788e"></div><div style="position:absolute;left:435.26px;top:353.46px;width:23.08px;height:22.89px;background:#433e85"></div><div style="position:absolute;left:458.04px;top:353.46px;width:23.08px;height:22.89px;background:#218f8d"></div><div style="position:absolute;left:480.82px;top:353.46px;width:23.08px;height:22.89px;background:#fde725"></div><div style="position:absolute;left:503.60px;top:353.46px;width:23.08px;height:22.89px;background:#375a8c"></div><div style="position:absolute;left:526.38px;top:353.46px;width:23.08px;height:22.89px;background:#39568c"></div><div style="position:absolute;left:549.16px;top:353.46px;width:23.08px;height:22.89px;background:#48186a"></div><div style="position:absolute;left:571.94px;top:353.46px;width:23.08px;height:22.89px;background:#218f8d"></div><div style="position:absolute;left:594.72px;top:353.46px;width:23.08px;height:22.89px;background:#3e4989"></div><div style="position:absolute;left:389.70px;top:376.05px;width:23.08px;height:22.89px;background:#472a7a"></div><div style="position:absolute;left:412.48px;top:376.05px;width:23.08px;height:22.89px;background:#355f8d"></div><div style="position:absolute;left:435.26px;top:376.05px;width:23.08px;height:22.89px;background:#2e6d8e"></div><div style="position:absolute;left:458.04px;top:376.05px;width:23.08px;height:22.89px;background:#25858e"></div><div style="position:absolute;left:480.82px;top:376.05px;width:23.08px;height:22.89px;background:#375a8c"></div><div style="position:absolute;left:503.60px;top:376.05px;width:23.08px;height:22.89px;background:#fde725"></div><div style="position:absolute;left:526.38px;top:376.05px;width:23.08px;height:22.89px;background:#3e4c8a"></div><div style="position:absolute;left:549.16px;top:376.05px;width:23.08px;height:22.89px;background:#472f7d"></div><div style="position:absolute;left:571.94px;top:376.05px;width:23.08px;height:22.89px;background:#25858e"></div><div style="position:absolute;left:594.72px;top:376.05px;width:23.08px;height:22.89px;background:#2d708e"></div><div style="position:absolute;left:389.70px;top:398.64px;width:23.08px;height:22.89px;background:#481b6d"></div><div style="position:absolute;left:412.48px;top:398.64px;width:23.08px;height:22.89px;background:#3e4a89"></div><div style="position:absolute;left:435.26px;top:398.64px;width:23.08px;height:22.89px;background:#46307e"></div><div style="position:absolute;left:458.04px;top:398.64px;width:23.08px;height:22.89px;background:#39568c"></div><div style="position:absolute;left:480.82px;top:398.64px;width:23.08px;height:22.89px;background:#39568c"></div><div style="position:absolute;left:503.60px;top:398.64px;width:23.08px;height:22.89px;background:#3e4c8a"></div><div style="position:absolute;left:526.38px;top:398.64px;width:23.08px;height:22.89px;background:#fde725"></div><div style="position:absolute;left:549.16px;top:398.64px;width:23.08px;height:22.89px;background:#472e7c"></div><div style="position:absolute;left:571.94px;top:398.64px;width:23.08px;height:22.89px;background:#39568c"></div><div style="position:absolute;left:594.72px;top:398.64px;width:23.08px;height:22.89px;background:#3a548c"></div><div style="position:absolute;left:389.70px;top:421.23px;width:23.08px;height:22.89px;background:#21a685"></div><div style="position:absolute;left:412.48px;top:421.23px;width:23.08px;height:22.89px;background:#30698e"></div><div style="position:absolute;left:435.26px;top:421.23px;width:23.08px;height:22.89px;background:#32648e"></div><div style="position:absolute;left:458.04px;top:421.23px;width:23.08px;height:22.89px;background:#440154"></div><div style="position:absolute;left:480.82px;top:421.23px;width:23.08px;height:22.89px;background:#48186a"></div><div style="position:absolute;left:503.60px;top:421.23px;width:23.08px;height:22.89px;background:#472f7d"></div><div style="position:absolute;left:526.38px;top:421.23px;width:23.08px;height:22.89px;background:#472e7c"></div><div style="position:absolute;left:549.16px;top:421.23px;width:23.08px;height:22.89px;background:#fde725"></div><div style="position:absolute;left:571.94px;top:421.23px;width:23.08px;height:22.89px;background:#440154"></div><div style="position:absolute;left:594.72px;top:421.23px;width:23.08px;height:22.89px;background:#33638d"></div><div style="position:absolute;left:389.70px;top:443.82px;width:23.08px;height:22.89px;background:#460b5e"></div><div style="position:absolute;left:412.48px;top:443.82px;width:23.08px;height:22.89px;background:#453581"></div><div style="position:absolute;left:435.26px;top:443.82px;width:23.08px;height:22.89px;background:#365c8d"></div><div style="position:absolute;left:458.04px;top:443.82px;width:23.08px;height:22.89px;background:#fde725"></div><div style="position:absolute;left:480.82px;top:443.82px;width:23.08px;height:22.89px;background:#218f8d"></div><div style="position:absolute;left:503.60px;top:443.82px;width:23.08px;height:22.89px;background:#25858e"></div><div style="position:absolute;left:526.38px;top:443.82px;width:23.08px;height:22.89px;background:#39568c"></div><div style="position:absolute;left:549.16px;top:443.82px;width:23.08px;height:22.89px;background:#440154"></div><div style="position:absolute;left:571.94px;top:443.82px;width:23.08px;height:22.89px;background:#fde725"></div><div style="position:absolute;left:594.72px;top:443.82px;width:23.08px;height:22.89px;background:#443a83"></div><div style="position:absolute;left:389.70px;top:466.41px;width:23.08px;height:22.89px;background:#34608d"></div><div style="position:absolute;left:412.48px;top:466.41px;width:23.08px;height:22.89px;background:#1f958b"></div><div style="position:absolute;left:435.26px;top:466.41px;width:23.08px;height:22.89px;background:#453882"></div><div style="position:absolute;left:458.04px;top:466.41px;width:23.08px;height:22.89px;background:#443a83"></div><div style="position:absolute;left:480.82px;top:466.41px;width:23.08px;height:22.89px;background:#3e4989"></div><div style="position:absolute;left:503.60px;top:466.41px;width:23.08px;height:22.89px;background:#2d708e"></div><div style="position:absolute;left:526.38px;top:466.41px;width:23.08px;height:22.89px;background:#3a548c"></div><div style="position:absolute;left:549.16px;top:466.41px;width:23.08px;height:22.89px;background:#33638d"></div><div style="position:absolute;left:571.94px;top:466.41px;width:23.08px;height:22.89px;background:#443a83"></div><div style="position:absolute;left:594.72px;top:466.41px;width:23.08px;height:22.89px;background:#fde725"></div><div class="plab" style="left:371.09px;top:255.9px;width:60px;text-align:center">num_preg</div><div style="position:absolute;left:400.84px;top:261.3px;width:0.6px;height:1.3px;background:#555"></div><div class="plab" style="left:393.87px;top:255.9px;width:60px;text-align:center">glucose_conc</div><div style="position:absolute;left:423.62px;top:261.3px;width:0.6px;height:1.3px;background:#555"></div><div class="plab" style="left:416.65px;top:255.9px;width:60px;text-align:center">diastolic_bp</div><div style="position:absolute;left:446.40px;top:261.3px;width:0.6px;height:1.3px;background:#555"></div><div class="plab" style="left:439.43px;top:255.9px;width:60px;text-align:center">thickness</div><div style="position:absolute;left:469.18px;top:261.3px;width:0.6px;height:1.3px;background:#555"></div><div class="plab" style="left:462.21px;top:255.9px;width:60px;text-align:center">insulin</div><div style="position:absolute;left:491.96px;top:261.3px;width:0.6px;height:1.3px;background:#555"></div><div class="plab" style="left:484.99px;top:255.9px;width:60px;text-align:center">bmi</div><div style="position:absolute;left:514.74px;top:261.3px;width:0.6px;height:1.3px;background:#555"></div><div class="plab" style="left:507.77px;top:255.9px;width:60px;text-align:center">diab_pred</div><div style="position:absolute;left:537.52px;top:261.3px;width:0.6px;height:1.3px;background:#555"></div><div class="plab" style="left:530.55px;top:255.9px;width:60px;text-align:center">age</div><div style="position:absolute;left:560.30px;top:261.3px;width:0.6px;height:1.3px;background:#555"></div><div class="plab" style="left:553.33px;top:255.9px;width:60px;text-align:center">skin</div><div style="position:absolute;left:583.08px;top:261.3px;width:0.6px;height:1.3px;background:#555"></div><div class="plab" style="left:576.11px;top:255.9px;width:60px;text-align:center">diabetes</div><div style="position:absolute;left:605.86px;top:261.3px;width:0.6px;height:1.3px;background:#555"></div><div class="plab" style="left:327.00px;top:272.50px;width:60px;text-align:right">num_preg</div><div style="position:absolute;left:387.6px;top:274.15px;width:1.3px;height:0.6px;background:#555"></div><div class="plab" style="left:327.00px;top:295.09px;width:60px;text-align:right">glucose_conc</div><div style="position:absolute;left:387.6px;top:296.74px;width:1.3px;height:0.6px;background:#555"></div><div class="plab" style="left:327.00px;top:317.68px;width:60px;text-align:right">diastolic_bp</div><div style="position:absolute;left:387.6px;top:319.33px;width:1.3px;height:0.6px;background:#555"></div><div class="plab" style="left:327.00px;top:340.27px;width:60px;text-align:right">thickness</div><div style="position:absolute;left:387.6px;top:341.92px;width:1.3px;height:0.6px;background:#555"></div><div class="plab" style="left:327.00px;top:362.86px;width:60px;text-align:right">insulin</div><div style="position:absolute;left:387.6px;top:364.50px;width:1.3px;height:0.6px;background:#555"></div><div class="plab" style="left:327.00px;top:385.45px;width:60px;text-align:right">bmi</div><div style="position:absolute;left:387.6px;top:387.10px;width:1.3px;height:0.6px;background:#555"></div><div class="plab" style="left:327.00px;top:408.04px;width:60px;text-align:right">diab_pred</div><div style="position:absolute;left:387.6px;top:409.69px;width:1.3px;height:0.6px;background:#555"></div><div class="plab" style="left:327.00px;top:430.63px;width:60px;text-align:right">age</div><div style="position:absolute;left:387.6px;top:432.28px;width:1.3px;height:0.6px;background:#555"></div><div class="plab" style="left:327.00px;top:453.22px;width:60px;text-align:right">skin</div><div style="position:absolute;left:387.6px;top:454.87px;width:1.3px;height:0.6px;background:#555"></div><div class="plab" style="left:327.00px;top:475.81px;width:60px;text-align:right">diabetes</div><div style="position:absolute;left:387.6px;top:477.46px;width:1.3px;height:0.6px;background:#555"></div>
<!-- horizontal scrollbar right -->
<div class="abs" style="left:331px;top:425.8px;width:211.8px;height:4.9px;background:rgba(121,121,121,0.4)"></div>

<div class="abs" style="left:627.2px;top:426px;width:4.8px;height:5px;background:#f4f4f4"></div>
<div class="abs" style="left:0;top:0;width:1.3px;height:431px;background:#5e5e5e"></div>
<div id="status"></div>
</body></html>
